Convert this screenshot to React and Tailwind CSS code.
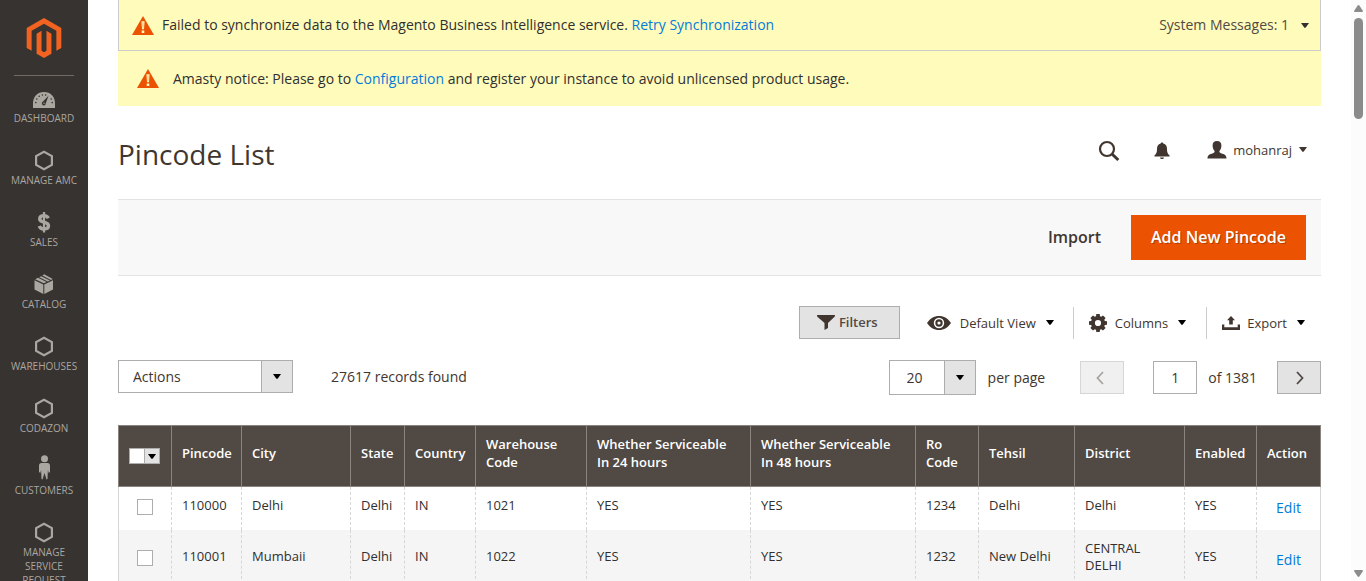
import React from "react";

const Caret = ({ className = "" }) => (
  <svg viewBox="0 0 8 5" className={`h-[5px] w-2 shrink-0 ${className}`} fill="currentColor" aria-hidden="true">
    <path d="M0 0h8L4.6 4.7H3.4z" />
  </svg>
);

const NavSvg = ({ children }) => (
  <svg viewBox="0 0 24 25" className="h-[25px] w-6 overflow-visible" fill="currentColor" aria-hidden="true">
    {children}
  </svg>
);

const Gauge = () => (
  <NavSvg>
    <path d="M1 22v-4.5C1 10.500 5.500 6 12 6s11 4.500 11 11.500V22z" />
    <g fill="#373330">
      <path d="M16.500 9.800 13.800 17.300a2 2 0 1 1-2.800-1.700z" />
      <circle cx="3.800" cy="16.600" r=".8" />
      <circle cx="4.800" cy="13" r=".8" />
      <circle cx="7.200" cy="10.300" r=".8" />
      <circle cx="10.400" cy="9" r=".8" />
      <circle cx="13.700" cy="9" r=".8" />
      <circle cx="19.200" cy="13" r=".8" />
      <circle cx="20.200" cy="16.600" r=".8" />
    </g>
    <circle cx="12" cy="17.300" r=".7" />
  </NavSvg>
);

const Hexagon = () => (
  <NavSvg>
    <path
      fillRule="evenodd"
      d="M12 2.500 21 7.500v10l-9 5-9-5v-10zM12 5.100 5.200 8.800v7.400l6.800 3.700 6.800-3.700V8.800z"
    />
  </NavSvg>
);

const Dollar = () => (
  <NavSvg>
    <path
      d="M16.300 8.300C15.600 6.700 14 5.800 12 5.800c-2.500 0-4.300 1.200-4.300 3.100 0 2.100 2 2.700 4.300 3.300 2.500.7 4.500 1.400 4.500 3.600 0 2-1.900 3.200-4.500 3.200-2.400 0-4.100-1.100-4.700-3"
      fill="none"
      stroke="currentColor"
      strokeWidth="3.400"
    />
    <path d="M10.900 2h2.200v20.500h-2.200z" />
  </NavSvg>
);

const Box = () => (
  <NavSvg>
    <path d="M2.500 8.300 11.300 12.400V22L2.500 17.500zM21 8.300 12.300 12.400V22L21 17.500zM3.200 7.200 6 5.800l8.600 4.200-2.800 1.300zM7.200 5.200l2-1 8.700 4.300-2.100 1zM10.300 3.500 12.200 2.200 20.800 6.900 18.900 8z" />
  </NavSvg>
);

const Person = () => (
  <NavSvg>
    <circle cx="12.500" cy=".8" r="3.500" />
    <path d="M9.500 5h6c1.700 0 2.500 1 2.500 2.500V14l-1.300 1-.8-3-.4 9-1 .5-2-6.500-2 6.500-1-.5-.4-9-.8 3L7 14V7.500C7 6 7.800 5 9.500 5z" />
  </NavSvg>
);

const NAV = [
  ["Dashboard", Gauge],
  ["Manage AMC", Hexagon],
  ["Sales", Dollar],
  ["Catalog", Box],
  ["Warehouses", Hexagon],
  ["Codazon", Hexagon],
  ["Customers", Person],
  ["Manage Service Request", Hexagon],
];

function Sidebar() {
  return (
    <aside className="flex w-[88px] shrink-0 flex-col items-center overflow-hidden bg-[#373330]">
      <a href="#home" aria-label="Magento" className="flex h-[75px] shrink-0 items-center text-[#f26322]">
        <svg viewBox="0 0 24 24" className="h-10 w-10" fill="currentColor" aria-hidden="true">
          <path d="M12 24l-4.455-2.572v-12l2.970-1.715v12.001l1.485.902 1.485-.902V7.713l2.971 1.715v12L12 24zM22.391 6v12l-2.969 1.714V7.713L12 3.430 4.574 7.713v12.001L1.609 18V6L12 0l10.391 6z" />
        </svg>
      </a>
      <nav className="w-full">
        <div className="mx-3.5 h-px bg-[#736963]" />
        <ul>
          {NAV.map(([label, Icon]) => (
            <li key={label}>
              <a
                href="#menu"
                className="flex min-h-[62px] flex-col items-center px-1.5 pt-2.5 text-center text-[10px] leading-[14px] text-[#aaa6a0] uppercase"
              >
                <Icon />
                <span className={label.length > 12 ? "w-14" : "whitespace-nowrap"}>{label}</span>
              </a>
            </li>
          ))}
        </ul>
      </nav>
    </aside>
  );
}

const Warning = () => (
  <svg viewBox="0 0 22 19" className="h-[19px] w-[22px] shrink-0" aria-hidden="true">
    <path d="M11 0 22 19H0z" fill="#eb5202" />
    <path d="M9.400 5.200h3.200l-.6 8h-2zM9.700 14.500h2.600V17H9.700z" fill="#fffbbb" />
    <path d="M10.600 6.200h.8l-.1 6h-.6z" fill="#eb5202" opacity=".5" />
  </svg>
);

const linkCls = "text-[#007bdb]";

function Notices() {
  return (
    <div className="text-sm leading-5">
      <div className="flex h-[51px] items-center border-x border-b border-[#ccc] bg-[#fffbbb] px-[13px]">
        <Warning />
        <p className="ml-2 flex-1">
          Failed to synchronize data to the Magento Business Intelligence service.{" "}
          <a href="#retry" className={linkCls}>Retry Synchronization</a>
        </p>
        <button type="button" className="flex items-center gap-3 text-[#514943]">
          System Messages: 1
          <Caret className="mr-[-2px] text-[#303030]" />
        </button>
      </div>
      <div className="flex h-[55px] items-center bg-[#fffbbb] px-[19px]">
        <Warning />
        <p className="ml-3.5">
          Amasty notice: Please go to <a href="#config" className={linkCls}>Configuration</a> and register your
          instance to avoid unlicensed product usage.
        </p>
      </div>
    </div>
  );
}

function PageHeader() {
  return (
    <header className="flex h-[93px] items-center justify-between pb-1 text-[#41362f]">
      <h1 className="pt-1.5 text-[28px] leading-9">Pincode List</h1>
      <div className="flex items-center pr-3.5">
        <button type="button" aria-label="Search">
          <svg viewBox="0 0 22 22" className="h-[22px] w-[22px]" fill="none" stroke="currentColor" aria-hidden="true">
            <circle cx="9" cy="9" r="7" strokeWidth="2.200" />
            <path d="m14 14 6.300 6" strokeWidth="3" />
          </svg>
        </button>
        <button type="button" aria-label="Notifications" className="ml-[34px]">
          <svg viewBox="0 0 16 18" className="h-[18px] w-4" fill="currentColor" aria-hidden="true">
            <path d="M8 .5c.9 0 1.200.4 1.300 1.100C12 2.200 13 4.300 13 7c0 3.500.6 4.700 2.500 6.300V14.500H.5v-1.200C2.400 11.700 3 10.500 3 7c0-2.700 1-4.800 3.700-5.400C6.800.9 7.100.5 8 .5zM6 15.500h4c-.2 1-1 1.600-2 1.600s-1.800-.6-2-1.600z" />
          </svg>
        </button>
        <button type="button" className="ml-[37px] flex items-center pb-0.5 text-[13px] leading-5">
          <svg viewBox="0 0 20 18" className="h-[18px] w-5" fill="currentColor" aria-hidden="true">
            <path d="M10 0c3 0 4.400 1.700 4.400 4.500 0 2.500-.8 4.300-2 5.500 0 1.300.3 1.700 1.600 2.200 3.700 1.200 5.500 2 5.500 5.300H.5c0-3.300 1.800-4.100 5.500-5.300 1.300-.5 1.600-.9 1.600-2.200-1.200-1.200-2-3-2-5.500C5.600 1.700 7 0 10 0z" />
          </svg>
          <span className="ml-1.5">mohanraj</span>
          <Caret className="ml-[7px]" />
        </button>
      </div>
    </header>
  );
}

function Toolbar() {
  return (
    <div className="flex items-center gap-[15px]">
      <button
        type="button"
        className="flex h-[33px] w-[101px] items-center justify-center gap-1 border border-[#adadad] bg-[#e3e3e3] pr-1 text-[13px] font-semibold text-[#514943]"
      >
        <svg viewBox="0 0 18 15" className="h-[15px] w-[18px]" fill="#41362f" aria-hidden="true">
          <path d="M0 0h18c0 1.500-.6 2-1.500 2.800L11 8v5l-3.500 2V8L1.500 2.800C.6 2 0 1.500 0 0z" />
        </svg>
        Filters
      </button>
      <div className="flex items-center divide-x divide-[#ccc] text-[13px] leading-8 text-[#41362f]">
        <button type="button" className="flex h-8 items-center pr-[19px] pl-3">
          <svg viewBox="0 0 24 14" className="h-3.5 w-6" fill="currentColor" aria-hidden="true">
            <path
              fillRule="evenodd"
              d="M0 7c3-4.500 7-7 12-7s9 2.500 12 7c-3 4.500-7 7-12 7S3 11.500 0 7zm12-5.200a5.200 5.200 0 1 0 0 10.400 5.200 5.200 0 0 0 0-10.400z"
            />
            <path fillRule="evenodd" d="M12 3.300a3.700 3.700 0 1 1 0 7.400 3.700 3.700 0 0 1 0-7.400zM12 5.400a1.600 1.600 0 1 0 0 3.200 1.600 1.600 0 0 0 0-3.200z" />
          </svg>
          <span className="ml-[9px]">Default View</span>
          <Caret className="ml-2.5 text-black" />
        </button>
        <button type="button" className="flex h-8 items-center pr-5 pl-[15px]">
          <svg viewBox="0 0 18 18" className="h-[18px] w-[18px]" fill="currentColor" aria-hidden="true">
            <path
              fillRule="evenodd"
              d="M7.300 0h3.400l.3 2.200 1.200.5 1.800-1.300L16.600 4l-1.300 1.800.5 1.200 2.200.3v3.400l-2.200.3-.5 1.200 1.300 1.800-2.600 2.600-1.800-1.300-1.200.5-.3 2.200H7.300L7 15.800l-1.200-.5L4 16.600 1.400 14l1.300-1.800-.5-1.200L0 10.700V7.300L2.200 7l.5-1.200L1.400 4 4 1.400l1.800 1.300L7 2.200zM9 5.900a3.100 3.100 0 1 0 0 6.200 3.100 3.100 0 0 0 0-6.200z"
            />
          </svg>
          <span className="ml-2">Columns</span>
          <Caret className="ml-2.5 text-black" />
        </button>
        <button type="button" className="flex h-8 items-center pr-4 pl-[15px]">
          <svg viewBox="0 0 18 14" className="h-3.5 w-[18px]" fill="currentColor" aria-hidden="true">
            <path d="M0 8.500h2.300v2.800h13.400V8.500H18V14H0zM9 0l4 4.300h-2.200V8.500H7.200V4.300H5z" />
          </svg>
          <span className="ml-[7px]">Export</span>
          <Caret className="ml-2.5 text-black" />
        </button>
      </div>
    </div>
  );
}

function Select({ label, value, width, box, text }) {
  return (
    <div className={`relative ${width} ${box}`}>
      <select
        aria-label={label}
        defaultValue={value}
        className={`h-full w-full appearance-none border border-[#adadad] bg-white text-sm text-[#41362f] ${text}`}
      >
        <option>{value}</option>
      </select>
      <span className="pointer-events-none absolute inset-y-0 right-0 flex w-8 items-center justify-center border border-[#adadad] bg-[#e3e3e3] text-black">
        <Caret />
      </span>
    </div>
  );
}

const Chevron = ({ d }) => (
  <svg viewBox="0 0 8 14" className="h-3.5 w-2" fill="none" stroke="currentColor" strokeWidth="1.800" aria-hidden="true">
    <path d={d} />
  </svg>
);

function GridControls() {
  return (
    <div className="mt-[21px] flex justify-between text-sm text-[#41362f]">
      <div className="flex items-center gap-[38px] self-start">
        <Select label="Actions" value="Actions" width="w-[175px]" box="h-[33px]" text="pl-3.5" />
        <span>27617 records found</span>
      </div>
      <div className="flex items-center">
        <Select label="Items per page" value="20" width="w-[87px]" box="h-[35px]" text="pl-[17px]" />
        <span className="ml-3">per page</span>
        <button
          type="button"
          disabled
          aria-label="Previous page"
          className="ml-[35px] flex h-[33px] w-11 items-center justify-center border border-[#d6d6d6] bg-[#f0f0f0] pr-1 text-[#a8a4a1]"
        >
          <Chevron d="M7 1 1.500 7 7 13" />
        </button>
        <input
          aria-label="Current page"
          defaultValue="1"
          className="ml-[29px] h-[33px] w-11 border border-[#adadad] bg-white text-center"
        />
        <span className="ml-[11px]">of 1381</span>
        <button
          type="button"
          aria-label="Next page"
          className="ml-5 flex h-[33px] w-11 items-center justify-center border border-[#adadad] bg-[#e3e3e3] pl-0.5 text-[#514943]"
        >
          <Chevron d="M1 1 6.500 7 1 13" />
        </button>
      </div>
    </div>
  );
}

const HEADERS = [
  "Pincode", "City", "State", "Country", "Warehouse Code", "Whether Serviceable In 24 hours",
  "Whether Serviceable In 48 hours", "Ro Code", "Tehsil", "District", "Enabled", "Action",
];

const COLS = [
  "w-[53px]", "w-[70px]", "", "w-[54px]", "w-[71px]", "w-[111px]", "w-[164px]",
  "w-[165px]", "w-[63px]", "w-[96px]", "w-[110px]", "w-[72px]", "w-[64px]",
];

const ROWS = [
  ["110000", "Delhi", "Delhi", "IN", "1021", "YES", "YES", "1234", "Delhi", "Delhi", "YES"],
  ["110001", "Mumbaii", "Delhi", "IN", "1022", "YES", "YES", "1232", "New Delhi", "CENTRAL DELHI", "YES"],
];

function Grid() {
  return (
    <table className="mt-[30px] w-full table-fixed border-collapse text-left text-[13px]">
      <colgroup>
        {COLS.map((c, i) => (
          <col key={i} className={c} />
        ))}
      </colgroup>
      <thead>
        <tr className="h-[61px] bg-[#514943] text-white">
          <th className="border border-[#8a837f]">
            <div className="flex justify-center pr-0.5">
              <div className="flex h-4 w-[31px] border border-[#adadad]">
                <input type="checkbox" aria-label="Select all" className="h-full w-3.5 appearance-none bg-white" />
                <button
                  type="button"
                  aria-label="Selection options"
                  className="flex flex-1 items-center justify-center border-l border-[#adadad] bg-[#e3e3e3] text-black"
                >
                  <Caret />
                </button>
              </div>
            </div>
          </th>
          {HEADERS.map((h) => (
            <th key={h} className="border border-[#8a837f] px-2.5 pb-1.5 leading-[18px] font-semibold">
              {h}
            </th>
          ))}
        </tr>
      </thead>
      <tbody>
        {ROWS.map((row, r) => {
          const pad = r === 0 ? "pb-1.5" : "pb-0";
          return (
            <tr key={row[0]} className={r % 2 ? "h-[54px] bg-[#f5f5f5]" : "h-[43px] bg-white"}>
              <td className={`border-r border-l border-[#d6d6d6] [border-right-style:dashed] ${pad}`}>
                <div className="flex justify-center pt-[3px]">
                  <input
                    type="checkbox"
                    aria-label={`Select ${row[0]}`}
                    className="h-4 w-4 appearance-none border border-[#adadad] bg-white"
                  />
                </div>
              </td>
              {row.map((v, c) => (
                <td key={c} className={`border-r border-dashed border-[#d6d6d6] px-2.5 leading-[17px] ${pad}`}>
                  {v}
                </td>
              ))}
              <td className={`border-r border-[#d6d6d6] pt-1.5 text-center text-sm ${pad}`}>
                <a href="#edit" className={linkCls}>Edit</a>
              </td>
            </tr>
          );
        })}
      </tbody>
    </table>
  );
}

function ScrollTrack() {
  return (
    <div className="flex w-[15px] shrink-0 flex-col items-center justify-between bg-[#fcfcfc] pt-[5px] pb-1 text-[#8b8b8b]">
      <div className="flex flex-col items-center gap-1.5">
        <svg viewBox="0 0 9 7" className="h-[7px] w-[9px]" fill="currentColor" aria-hidden="true">
          <path d="M3.700.5q.8-.9 1.600 0L9 6q0 1-1 1H1Q0 7 0 6z" />
        </svg>
        <div className="h-[101px] w-[9px] rounded-full bg-[#8b8b8b]" />
      </div>
      <svg viewBox="0 0 9 7" className="h-[7px] w-[9px]" fill="currentColor" aria-hidden="true">
        <path d="M3.700 6.500q.8.900 1.600 0L9 1q0-1-1-1H1Q0 0 0 1z" />
      </svg>
    </div>
  );
}

export default function App() {
  return (
    <div className="flex h-screen overflow-hidden bg-white font-['Open_Sans',sans-serif] text-[#303030]">
      <Sidebar />
      <main className="min-w-0 flex-1 overflow-hidden px-[30px]">
        <Notices />
        <PageHeader />
        <div className="flex h-[77px] items-center justify-end gap-[30px] border-y border-[#e3e3e3] bg-[#f8f8f8] pr-[15px] text-base font-semibold">
          <button type="button" className="pb-0.5 text-[#41362f]">Import</button>
          <button
            type="button"
            className="h-[45px] w-[175px] bg-[#eb5202] pb-0.5 text-white [text-shadow:1px_1px_0_rgba(0,0,0,0.25)]"
          >
            Add New Pincode
          </button>
        </div>
        <div className="mt-[30px] flex justify-end">
          <Toolbar />
        </div>
        <GridControls />
        <Grid />
      </main>
      <ScrollTrack />
    </div>
  );
}
